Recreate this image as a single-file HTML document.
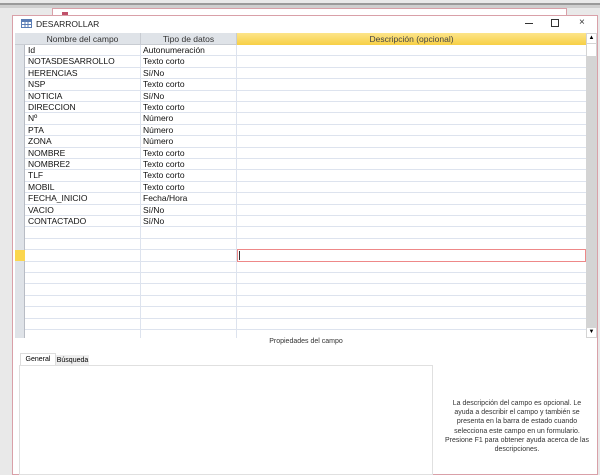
<!DOCTYPE html>
<html><head><style>
*{margin:0;padding:0;box-sizing:border-box}
body{width:600px;height:466px;overflow:hidden;background:#e9e9e9;font-family:"Liberation Sans",sans-serif;position:relative}
.abs{position:absolute}
.row{position:absolute;left:0;height:11.4px;width:571px;border-bottom:1px solid #dde3ee;font-size:8.5px;line-height:11px;color:#111}
.row div{position:absolute;top:0;height:100%}
</style></head><body>
<div class="abs" style="left:0;top:3px;width:600px;height:2px;background:#9a9a9a"></div>
<div class="abs" style="left:0;top:5px;width:600px;height:3px;background:#cfcfcf"></div>
<div class="abs" style="left:52px;top:8px;width:515px;height:10px;background:#fff;border:1px solid #d9a0a8"></div>
<div class="abs" style="left:62px;top:12px;width:6px;height:3px;background:#c0506a"></div>
<div class="abs" style="left:12px;top:15px;width:586px;height:460px;background:#fff;border:1px solid #d9a0a8"></div>
<svg class="abs" style="left:21px;top:19px" width="11" height="9"><rect x="0.5" y="0.5" width="10" height="8" fill="#fff" stroke="#5a7db5"/><rect x="1" y="1" width="9" height="2" fill="#5a7db5"/><line x1="4" y1="3" x2="4" y2="9" stroke="#5a7db5"/><line x1="7" y1="3" x2="7" y2="9" stroke="#5a7db5"/><line x1="1" y1="5.5" x2="10" y2="5.5" stroke="#5a7db5"/></svg>
<div class="abs" style="left:36px;top:19px;font-size:8.5px;color:#222">DESARROLLAR</div>
<div class="abs" style="left:525px;top:23px;width:8px;height:1px;background:#333"></div>
<div class="abs" style="left:551px;top:19px;width:8px;height:8px;border:1px solid #333"></div>
<div class="abs" style="left:579px;top:17px;font-size:10px;color:#333">×</div>
<div class="abs" style="left:15px;top:33px;width:571px;height:305px;overflow:hidden;background:#fff">
 <div class="abs" style="left:0;top:0;width:571px;height:12px;background:#dfe3e8;font-size:8.5px;line-height:12px;color:#333;border-bottom:1px solid #c8ccd2">
  <div class="abs" style="left:10px;width:116px;text-align:center;border-right:1px solid #c8ccd2;height:12px">Nombre del campo</div>
  <div class="abs" style="left:126px;width:96px;text-align:center;border-right:1px solid #c8ccd2;height:12px">Tipo de datos</div>
  <div class="abs" style="left:222px;width:349px;text-align:center;height:12px;background:linear-gradient(#fde58a,#f7cf45);color:#444">Descripción (opcional)</div>
 </div>
 <div id="g"></div>
 <div class="abs" style="left:0;top:12px;width:10px;height:300px;background:#dfe3e8;border-right:1px solid #b8bcc4"></div>
 <div class="abs" style="left:125px;top:12px;width:1px;height:300px;background:#dde3ee"></div>
 <div class="abs" style="left:221px;top:12px;width:1px;height:300px;background:#dde3ee"></div>
 <div class="abs" style="left:0;top:217px;width:10px;height:11px;background:#fbd64e"></div>
 <div class="abs" style="left:222px;top:216px;width:349px;height:13px;border:1px solid #e88"></div>
 <div class="abs" style="left:224px;top:218px;width:1px;height:9px;background:#333"></div>
</div>
<div class="abs" style="left:586px;top:33px;width:11px;height:305px;background:#d4d4d4"></div>
<div class="abs" style="left:587px;top:34px;width:9px;height:9px;background:#fff;font-size:6px;text-align:center;line-height:9px">▲</div>
<div class="abs" style="left:587px;top:44px;width:9px;height:12px;background:#fff"></div>
<div class="abs" style="left:587px;top:328px;width:9px;height:9px;background:#fff;font-size:6px;text-align:center;line-height:9px">▼</div>
<div class="abs" style="left:15px;top:338px;width:582px;text-align:center;font-size:7px;color:#333">Propiedades del campo</div>
<div class="abs" style="left:20px;top:353px;width:36px;height:13px;background:#fff;border:1px solid #ddd;border-bottom:none;font-size:7px;line-height:12px;text-align:center">General</div>
<div class="abs" style="left:56px;top:355px;width:33px;height:11px;background:#eee;font-size:7px;line-height:11px;text-align:center">Búsqueda</div>
<div class="abs" style="left:19px;top:365px;width:414px;height:110px;border:1px solid #e0e0e0"></div>
<div class="abs" style="left:443px;top:399px;width:148px;text-align:center;font-size:7px;line-height:9.2px;color:#333">La descripción del campo es opcional. Le ayuda a describir el campo y también se presenta en la barra de estado cuando selecciona este campo en un formulario. Presione F1 para obtener ayuda acerca de las descripciones.</div>
<script>
var d=[["Id","Autonumeración"],["NOTASDESARROLLO","Texto corto"],["HERENCIAS","Sí/No"],["NSP","Texto corto"],["NOTICIA","Sí/No"],["DIRECCION","Texto corto"],["Nº","Número"],["PTA","Número"],["ZONA","Número"],["NOMBRE","Texto corto"],["NOMBRE2","Texto corto"],["TLF","Texto corto"],["MOBIL","Texto corto"],["FECHA_INICIO","Fecha/Hora"],["VACIO","Sí/No"],["CONTACTADO","Sí/No"]];
var h="";for(var i=0;i<27;i++){var r=d[i]||["",""];h+='<div class="row" style="top:'+(12+i*11.4)+'px"><div style="left:13px">'+r[0]+'</div><div style="left:128px">'+r[1]+'</div></div>';}
document.getElementById("g").innerHTML=h;
</script>
</body></html>
